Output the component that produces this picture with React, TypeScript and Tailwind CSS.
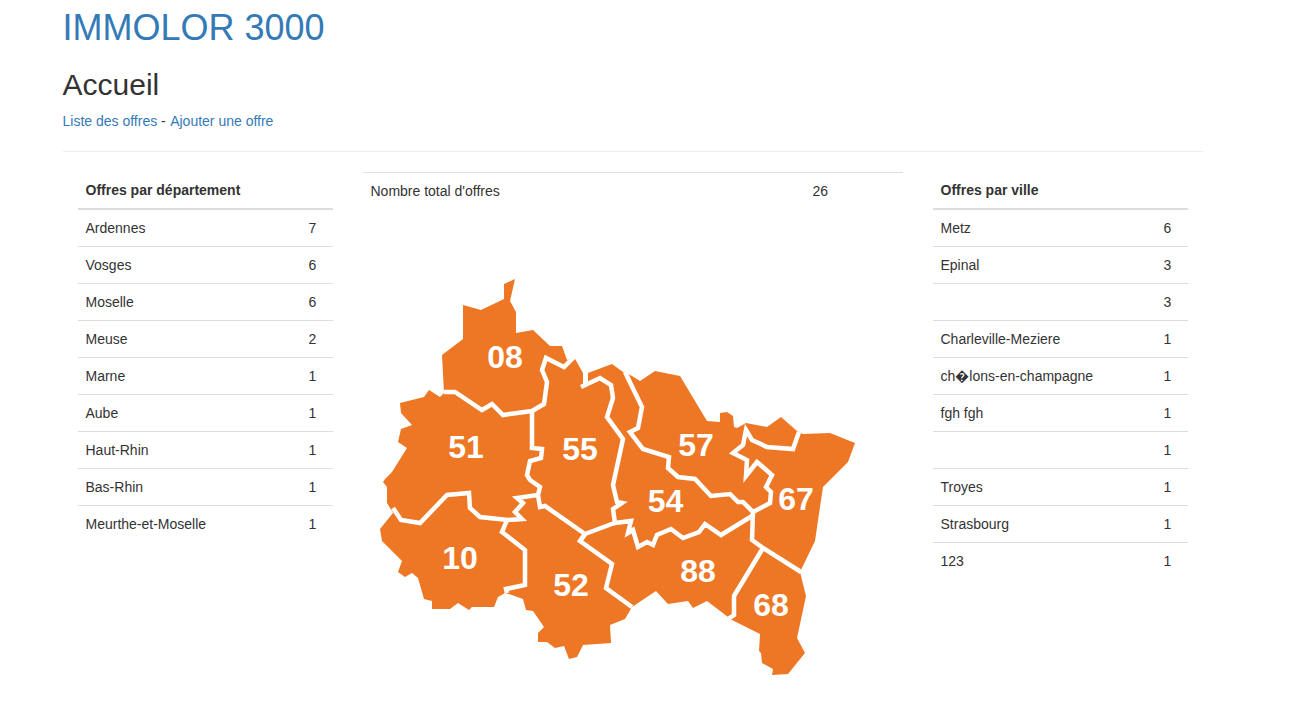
const departements: [string, number][] = [
  ['Ardennes', 7],
  ['Vosges', 6],
  ['Moselle', 6],
  ['Meuse', 2],
  ['Marne', 1],
  ['Aube', 1],
  ['Haut-Rhin', 1],
  ['Bas-Rhin', 1],
  ['Meurthe-et-Moselle', 1],
];

const villes: [string, number][] = [
  ['Metz', 6],
  ['Epinal', 3],
  ['', 3],
  ['Charleville-Meziere', 1],
  ['ch\uFFFDlons-en-champagne', 1],
  ['fgh fgh', 1],
  ['', 1],
  ['Troyes', 1],
  ['Strasbourg', 1],
  ['123', 1],
];

// ─── Map of the region, coordinates are page pixels ───────────────────────────

const outline = `504,284 515,279 510,301 516,312 516,333 533,330 550,346 562,346 567,360 574,357 583,373 583,387 588,383 588,373
  612,364 623,372 632,376 640,381 655,371 680,376 707,421 720,422 720,413 727,412 733,416 734,427 737,428 746,423 767,427 781,417
  797,431 803,434 830,433 855,443 848,462 823,487 820,507 815,541 800,572 806,596 797,638 805,653 788,674 772,675 773,669 762,663
  761,653 759,651 760,634 732,620 728,617 707,601 693,608 688,601 668,604 656,591 632,607 625,619 610,625 611,643 583,645 577,657
  569,659 564,646 555,648 547,642 538,642 538,633 544,627 533,611 526,610 523,599 512,595 505,593 498,597 494,607 472,607 469,610
  458,603 450,609 432,609 432,601 424,599 418,578 412,573 405,577 398,572 402,561 382,541 380,529 393,513 387,503 387,487 383,482
  385,479 392,472 407,448 398,442 401,429 412,425 401,413 400,403 424,397 429,390 440,397 444,393 442,355 463,339 463,305 481,310 504,299`;

const borders = [
  '444,392 455,392 482,410 492,404 503,415 532,411 544,404 547,382 542,370 546,358 564,367 574,357',
  '532,411 532,448 542,449 541,458 530,461 527,475 530,480 540,487 538,495 517,498 523,503 515,512 522,519 508,520 480,517 470,508 469,493 447,495 420,523 401,520 393,508',
  '507,520 502,532 525,550 525,585 506,589 507,593',
  '538,495 540,507 545,506 585,534 580,541 612,564 606,588 632,607',
  '581,540 585,534 617,522',
  '581,387 600,378 611,385 613,398 607,417 623,439 613,485 617,502 622,503 613,509 615,523 631,521 628,533 633,530 638,547 647,542 653,545 657,535 671,529 683,538 699,532 705,524 721,535 752,516',
  '625,372 642,407 638,428 630,432 643,449 669,457 668,468 678,477 695,479 711,496 730,494 738,502 743,502 753,512 770,503 771,492 766,487 772,475 757,462 746,476 747,460 733,453 743,445 746,430 752,440 767,447 793,449 799,432',
  '753,512 752,540 763,548 801,572',
  '763,548 734,596 734,615 728,619',
];

const labels: [string, number, number][] = [
  ['08', 505, 356],
  ['51', 466, 446],
  ['55', 580, 448],
  ['57', 696, 444],
  ['54', 665.5, 500],
  ['67', 796, 498],
  ['10', 460, 557],
  ['52', 571, 584],
  ['88', 698, 570],
  ['68', 771, 604],
];

function RegionMap() {
  return (
    <svg viewBox="363 229 540 470" className="block h-[470px] w-[540px]">
      <polygon points={outline} fill="#ee7725" />
      {borders.map((b, i) => (
        <polyline key={i} points={b} fill="none" stroke="#ffffff" strokeWidth={4.5} strokeLinejoin="miter" />
      ))}
      {labels.map(([label, x, y]) => (
        <text
          key={label}
          x={x}
          y={y + 11.5}
          textAnchor="middle"
          fill="#ffffff"
          fontSize={32}
          fontWeight={700}
          fontFamily="'Liberation Sans', Arial, sans-serif"
        >
          {label}
        </text>
      ))}
    </svg>
  );
}

// ─── Count table ──────────────────────────────────────────────────────────────

function CountTable({ title, rows }: { title: string; rows: [string, number][] }) {
  return (
    <table className="mb-5 w-full table-fixed border-collapse">
      <thead>
        <tr>
          <th className="border-b-2 border-[#ddd] p-2 text-left font-bold">{title}</th>
          <th className="w-[32px] border-b-2 border-[#ddd] p-2" />
        </tr>
      </thead>
      <tbody>
        {rows.map(([name, count], i) => (
          <tr key={i}>
            <td className="border-t border-[#ddd] p-2">{name}</td>
            <td className="border-t border-[#ddd] py-2 pl-2">{count}</td>
          </tr>
        ))}
      </tbody>
    </table>
  );
}

// ─── Page ─────────────────────────────────────────────────────────────────────

export default function App() {
  return (
    <div className="h-[712px] overflow-hidden bg-white font-['Liberation_Sans',Arial,sans-serif] text-sm leading-5 text-[#333]">
      <div className="ml-[47.5px] w-[1170px] px-[15px] pt-2">
        <h1 className="mb-5 text-[36px] leading-[39.6px] text-[#337ab7]">IMMOLOR 3000</h1>
        <h2 className="mb-2.5 text-[30px] leading-[33px]">Accueil</h2>
        <p>
          <a className="text-[#337ab7]" href="#">Liste des offres</a>
          {' - '}
          <a className="ml-[0.5px] text-[#337ab7]" href="#">Ajouter une offre</a>
        </p>
        <hr className="my-5 border-t border-[#eee]" />

        <div className="grid grid-cols-[285px_570px_285px]">
          <div className="px-[15px]">
            <CountTable title="Offres par département" rows={departements} />
          </div>

          <div className="px-[15px]">
            <table className="mb-5 w-full table-fixed border-collapse">
              <tbody>
                <tr>
                  <td className="border-t border-[#ddd] p-2">Nombre total d'offres</td>
                  <td className="w-[98px] border-t border-[#ddd] p-2">26</td>
                </tr>
              </tbody>
            </table>
            <RegionMap />
          </div>

          <div className="px-[15px]">
            <CountTable title="Offres par ville" rows={villes} />
          </div>
        </div>
      </div>
    </div>
  );
}
